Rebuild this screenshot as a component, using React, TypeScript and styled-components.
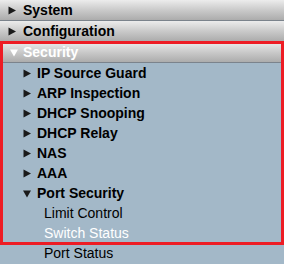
import styled, { createGlobalStyle } from 'styled-components';

const GlobalStyle = createGlobalStyle`
  html, body {
    margin: 0;
    padding: 0;
    background: #a3b8c8;
  }
  body {
    font-family: "Liberation Sans", Arial, sans-serif;
  }
`;

function Arrow({ open, color }: { open?: boolean; color?: string }) {
  return (
    <svg width="8" height="9" viewBox="0 0 8 9">
      {open ? (
        <polygon points="0,1.5 8,1.5 4,8.5" fill={color ?? '#1a1a1a'} />
      ) : (
        <polygon points="0.5,0.5 8,4.5 0.5,8.5" fill={color ?? '#1a1a1a'} />
      )}
    </svg>
  );
}

export default function App() {
  return (
    <>
      <GlobalStyle />
      <Menu>
        <Header>
          <Arrow />
          <span>System</span>
        </Header>
        <Header>
          <Arrow />
          <span>Configuration</span>
        </Header>

        <Section>
          <Header $active>
            <Arrow open color="#fff" />
            <span>Security</span>
          </Header>
          <Item>
            <Arrow />
            <span>IP Source Guard</span>
          </Item>
          <Item>
            <Arrow />
            <span>ARP Inspection</span>
          </Item>
          <Item>
            <Arrow />
            <span>DHCP Snooping</span>
          </Item>
          <Item>
            <Arrow />
            <span>DHCP Relay</span>
          </Item>
          <Item>
            <Arrow />
            <span>NAS</span>
          </Item>
          <Item>
            <Arrow />
            <span>AAA</span>
          </Item>
          <Item>
            <Arrow open />
            <span>Port Security</span>
          </Item>
          <Leaf>Limit Control</Leaf>
          <Leaf $selected>Switch Status</Leaf>
        </Section>
        <Leaf>Port Status</Leaf>
      </Menu>
    </>
  );
}

const Menu = styled.nav`
  width: 284px;
  display: flex;
  flex-direction: column;
`;

const Header = styled.div<{ $active?: boolean }>`
  height: 20px;
  display: flex;
  align-items: center;
  gap: 7px;
  padding-left: 8px;
  border-bottom: 1px solid #7b838c;
  background: linear-gradient(to bottom, #ececec 0%, #cacaca 50%, #acacac 100%);
  font-size: 14px;
  font-weight: bold;
  color: ${(p) => (p.$active ? '#fff' : '#000')};

  svg {
    margin-left: ${(p) => (p.$active ? '2px' : '0')};
    margin-right: ${(p) => (p.$active ? '-2px' : '0')};
  }
`;

const Section = styled.div`
  position: relative;
  display: flex;
  flex-direction: column;

  &::after {
    content: '';
    position: absolute;
    top: -1px;
    left: 0;
    right: 0;
    bottom: -2px;
    border: 3px solid #ed1c24;
    pointer-events: none;
  }
`;

const Item = styled.div`
  height: 20px;
  display: flex;
  align-items: center;
  gap: 6px;
  padding-left: 23px;
  font-size: 14px;
  font-weight: bold;
  color: #000;
`;

const Leaf = styled.div<{ $selected?: boolean }>`
  height: 20px;
  display: flex;
  align-items: center;
  padding-left: 44px;
  font-size: 14px;
  color: ${(p) => (p.$selected ? '#fff' : '#000')};
`;
